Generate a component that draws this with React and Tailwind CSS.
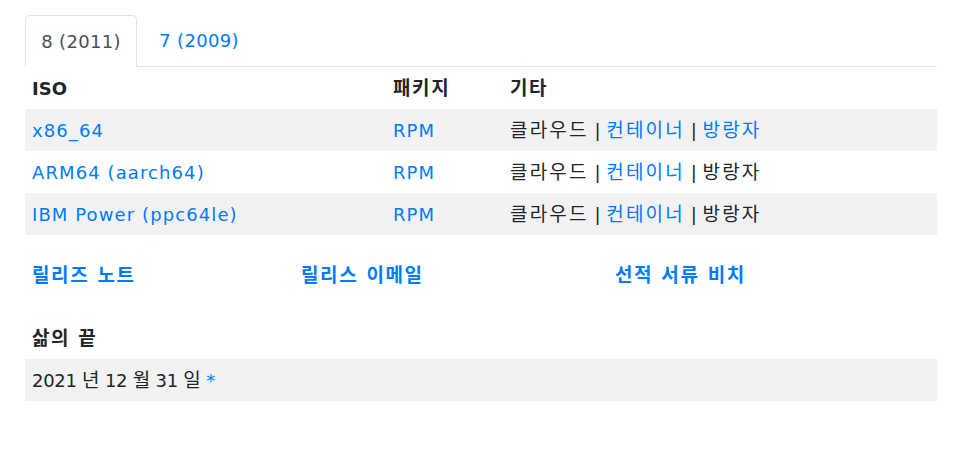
function K({ children, className = "", t = "tracking-[1.6px]" }) {
  return <span className={`text-[19px] ${t} ${className}`}>{children}</span>;
}

export default function App() {
  const font = { fontFamily: '"DejaVu Sans", "Noto Sans CJK KR", sans-serif' };
  const rows = [
    { iso: "x86_64", last: true },
    { iso: "ARM64 (aarch64)", last: false },
    { iso: "IBM Power (ppc64le)", last: false },
  ];
  return (
    <div className="w-[978px] h-[452px] bg-white text-[#212529] text-[18px] tracking-[1.1px]" style={font}>
      <div className="pl-[25px] pr-[41px] pt-[15px]">
        <div className="flex border-b border-[#dee2e6] h-[52px] tracking-[0.3px]">
          <div className="w-[112px] h-[52px] -mb-px border border-[#dee2e6] border-b-white rounded-t-[5px] bg-white flex items-center justify-center text-[#495057]">
            8 (2011)
          </div>
          <div className="w-[124px] h-[51px] flex items-center justify-center text-[#007bff]">
            7 (2009)
          </div>
        </div>
        <div className="grid grid-cols-[361px_117px_1fr]">
          <div className="h-[42px] px-[7px] flex items-center font-bold tracking-normal">ISO</div>
          <div className="h-[42px] px-[7px] flex items-center font-bold"><K>패키지</K></div>
          <div className="h-[42px] px-[7px] flex items-center font-bold"><K>기타</K></div>
          {rows.map((r, i) => {
            const bg = i % 2 === 0 ? "bg-[#f2f2f2]" : "bg-white";
            return [
              <div key={"a" + i} className={`h-[42px] px-[7px] flex items-center ${bg} text-[#007bff]`}>{r.iso}</div>,
              <div key={"b" + i} className={`h-[42px] px-[7px] flex items-center ${bg} text-[#007bff]`}>RPM</div>,
              <div key={"c" + i} className={`h-[42px] px-[7px] flex items-center ${bg} whitespace-pre tracking-normal`}>
                <K t="tracking-[2.2px]">클라우드</K>
                <span> | </span>
                <K t="tracking-[2.2px]" className="text-[#007bff]">컨테이너</K>
                <span> | </span>
                <K t="tracking-[2.2px]" className={r.last ? "text-[#007bff]" : ""}>방랑자</K>
              </div>,
            ];
          })}
        </div>
        <div className="grid grid-cols-[269px_314px_1fr] mt-[24px] h-[32px] items-center px-[7px] font-bold text-[#007bff]">
          <K>릴리즈 노트</K>
          <K>릴리스 이메일</K>
          <K>선적 서류 비치</K>
        </div>
        <div className="mt-[26px] h-[42px] px-[7px] flex items-center font-bold"><K>삶의 끝</K></div>
        <div className="h-[42px] px-[7px] flex items-center bg-[#f2f2f2] whitespace-pre tracking-[-0.3px]">
          <span>2021 </span><K t="tracking-normal">년</K><span> 12 </span><K t="tracking-normal">월</K><span> 31 </span><K t="tracking-normal">일</K><span className="text-[#007bff]"> *</span>
        </div>
      </div>
    </div>
  );
}
